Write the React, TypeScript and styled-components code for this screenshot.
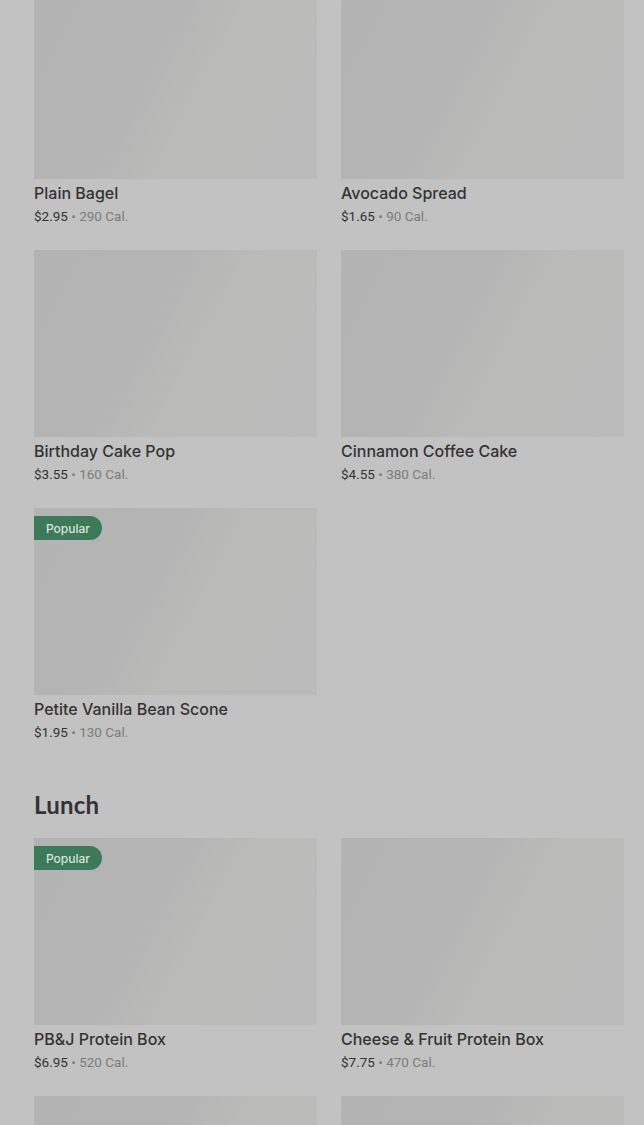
import styled, { createGlobalStyle } from "styled-components";

const GlobalStyle = createGlobalStyle`
  html, body {
    margin: 0;
    padding: 0;
    background: #c2c2c2;
    overflow: hidden;
  }
  body {
    font-family: Inter, "Liberation Sans", Arial, sans-serif;
    color: #333333;
  }
`;

const Page = styled.main`
  margin-top: -8px;
  padding: 0 20px 0 34px;
`;

const Section = styled.section`
  & + & {
    margin-top: 48px;
  }
`;

const SectionTitle = styled.h2`
  margin: 0 0 18px;
  font-family: Lato, Inter, "Liberation Sans", sans-serif;
  font-size: 24px;
  line-height: 30px;
  font-weight: 700;
  letter-spacing: 0.2px;
  color: #333333;
`;

const Grid = styled.ul`
  list-style: none;
  margin: 0;
  padding: 0;
  display: grid;
  grid-template-columns: 283px 283px;
  column-gap: 24px;
  row-gap: 24px;
`;

const Card = styled.li`
  display: flex;
  flex-direction: column;
`;

const Thumb = styled.div`
  position: relative;
  height: 187px;
  background: linear-gradient(
    118deg,
    #b3b3b3 0%,
    #b4b4b4 38%,
    #babab9 58%,
    #bbbbbb 100%
  );
`;

const Badge = styled.span`
  position: absolute;
  top: 8px;
  left: 0;
  height: 24px;
  padding: 0 12px;
  display: flex;
  align-items: center;
  border-radius: 0 12px 12px 0;
  background: #3c7a5a;
  color: #d7e4dc;
  font-size: 12px;
  font-weight: 500;
`;

const Name = styled.h3`
  margin: 3px 0 0;
  font-size: 16px;
  line-height: 22px;
  font-weight: 500;
  color: #333333;
`;

const Meta = styled.p`
  margin: 3px 0 0;
  font-family: Roboto, "Liberation Sans", sans-serif;
  font-size: 13.5px;
  line-height: 19px;
  color: #7c7c7c;
`;

const Price = styled.span`
  color: #333333;
`;

type Item = { id: string; name?: string; price?: string; cal?: string; popular?: boolean };

const sections: { title?: string; items: Item[] }[] = [
  {
    items: [
      { id: "bagel", name: "Plain Bagel", price: "$2.95", cal: "290" },
      { id: "avocado", name: "Avocado Spread", price: "$1.65", cal: "90" },
      { id: "cakepop", name: "Birthday Cake Pop", price: "$3.55", cal: "160" },
      { id: "coffeecake", name: "Cinnamon Coffee Cake", price: "$4.55", cal: "380" },
      { id: "scone", name: "Petite Vanilla Bean Scone", price: "$1.95", cal: "130", popular: true },
    ],
  },
  {
    title: "Lunch",
    items: [
      { id: "pbj", name: "PB&J Protein Box", price: "$6.95", cal: "520", popular: true },
      { id: "cheese", name: "Cheese & Fruit Protein Box", price: "$7.75", cal: "470" },
      { id: "lunch-3" },
      { id: "lunch-4" },
    ],
  },
];

const App = () => {
  return (
    <>
      <GlobalStyle />
      <Page>
        {sections.map((section, i) => (
          <Section key={i}>
            {section.title && <SectionTitle>{section.title}</SectionTitle>}
            <Grid>
              {section.items.map((item) => (
                <Card key={item.id}>
                  <Thumb>{item.popular && <Badge>Popular</Badge>}</Thumb>
                  {item.name && (
                    <>
                      <Name>{item.name}</Name>
                      <Meta>
                        <Price>{item.price}</Price> • {item.cal} Cal.
                      </Meta>
                    </>
                  )}
                </Card>
              ))}
            </Grid>
          </Section>
        ))}
      </Page>
    </>
  );
};

export default App;
